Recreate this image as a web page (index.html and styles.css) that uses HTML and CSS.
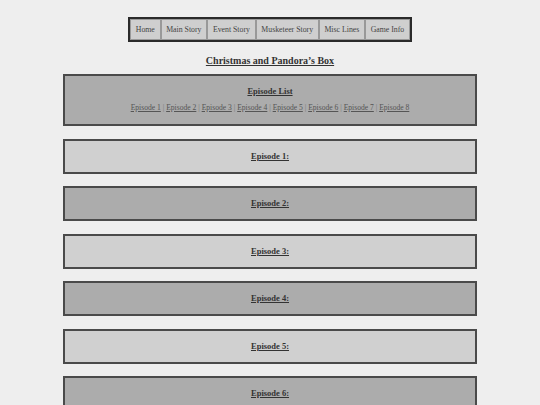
FILE: index.html
```html
<!DOCTYPE html>
<html lang="en">
<head>
  <meta charset="UTF-8">
  <meta name="viewport" content="width=device-width, initial-scale=1.0">
  <title>Christmas and Pandora's Box</title>
  <link rel="stylesheet" href="styles.css">
</head>
<body>

<div class="navbar">
  <a href="index.html">Home</a>
  <a href="main.html">Main Story</a>
  <a href="event.html">Event Story</a>
  <a href="musketeer.html">Musketeer Story</a>
  <a href="misc.html">Misc Lines</a>
  <a href="info.html">Game Info</a>
</div>

<h1 class="page-title">Christmas and Pandora’s Box</h1>

<div class="episode-box dark">
  <h2><a href="#list">Episode List</a></h2>
  <p class="episode-links">
    <a href="#ep1">Episode 1</a> | <a href="#ep2">Episode 2</a> | <a href="#ep3">Episode 3</a> | <a href="#ep4">Episode 4</a> | <a href="#ep5">Episode 5</a> | <a href="#ep6">Episode 6</a> | <a href="#ep7">Episode 7</a> | <a href="#ep8">Episode 8</a>
  </p>
</div>

<div class="episode-box light" id="ep1"><h2><a href="#ep1">Episode 1:</a></h2></div>
<div class="episode-box dark" id="ep2"><h2><a href="#ep2">Episode 2:</a></h2></div>
<div class="episode-box light" id="ep3"><h2><a href="#ep3">Episode 3:</a></h2></div>
<div class="episode-box dark" id="ep4"><h2><a href="#ep4">Episode 4:</a></h2></div>
<div class="episode-box light" id="ep5"><h2><a href="#ep5">Episode 5:</a></h2></div>
<div class="episode-box dark" id="ep6"><h2><a href="#ep6">Episode 6:</a></h2></div>
<div class="episode-box light" id="ep7"><h2><a href="#ep7">Episode 7:</a></h2></div>

</body>
</html>
```

FILE: styles.css
```css
body {
  margin: 0;
  padding: 0;
  background-color: #eeeeee;
  color: #333;
  font-family: "Liberation Serif", "Times New Roman", serif;
}

/* top menu */
.navbar {
  display: flex;
  width: fit-content;
  margin: 17px auto 0;
  border: 2px solid #2a2a2a;
  background-color: #cfcfcf;
}

.navbar a {
  display: block;
  padding: 0 4.7px;
  line-height: 19px;
  border: 1px solid #999;
  color: #444;
  text-decoration: none;
  font-size: 7.8px;
}

.page-title {
  margin: 12px 0 0;
  height: 20px;
  text-align: center;
  font-size: 10px;
  line-height: 14px;
  text-decoration: underline;
}

/* episode boxes */
.episode-box {
  margin: 0 63px 12.5px;
  border: 2px solid #4a4a4a;
  text-align: center;
}

.episode-box.dark {
  background-color: #acacac;
}

.episode-box.light {
  background-color: #d0d0d0;
}

.episode-box h2 {
  margin: 0;
  font-size: 8.5px;
  line-height: 31px;
}

.episode-box a {
  color: #333;
}

.episode-links {
  margin: -4px 0 0;
  padding-bottom: 11px;
  font-size: 7.6px;
  line-height: 10px;
  color: #777;
}

.episode-links a {
  color: #555;
}
```
